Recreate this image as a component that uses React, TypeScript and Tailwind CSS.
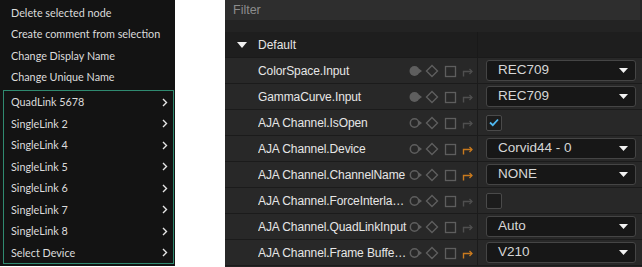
import React from 'react';

type Row = {
  label: string;
  keyed: boolean;
  linked: boolean;
  kind: 'select' | 'check' | 'uncheck';
  value?: string;
};

const rows: Row[] = [
  { label: 'ColorSpace.Input', keyed: true, linked: false, kind: 'select', value: 'REC709' },
  { label: 'GammaCurve.Input', keyed: true, linked: false, kind: 'select', value: 'REC709' },
  { label: 'AJA Channel.IsOpen', keyed: false, linked: false, kind: 'check' },
  { label: 'AJA Channel.Device', keyed: false, linked: true, kind: 'select', value: 'Corvid44 - 0' },
  { label: 'AJA Channel.ChannelName', keyed: false, linked: true, kind: 'select', value: 'NONE' },
  { label: 'AJA Channel.ForceInterlaced', keyed: false, linked: false, kind: 'uncheck' },
  { label: 'AJA Channel.QuadLinkInput', keyed: false, linked: false, kind: 'select', value: 'Auto' },
  { label: 'AJA Channel.Frame Buffer Format', keyed: false, linked: true, kind: 'select', value: 'V210' },
];

const menuTop = ['Delete selected node', 'Create comment from selection', 'Change Display Name', 'Change Unique Name'];
const menuSub = ['QuadLink 5678', 'SingleLink 2', 'SingleLink 4', 'SingleLink 5', 'SingleLink 6', 'SingleLink 7', 'SingleLink 8', 'Select Device'];

function Chevron() {
  return (
    <svg width="6" height="9" viewBox="0 0 6 9" className="shrink-0">
      <polyline points="1,1 4.5,4.5 1,8" fill="none" stroke="#e6e6e6" strokeWidth="1.4" />
    </svg>
  );
}

function RowIcons({ keyed, linked }: { keyed: boolean; linked: boolean }) {
  const g = '#5e5e5e';
  const a = linked ? '#c97a1e' : '#4f4f4f';
  return (
    <svg width="66" height="14" viewBox="0 0 66 14" className="shrink-0">
      {keyed ? (
        <circle cx="5.5" cy="7" r="5" fill={g} />
      ) : (
        <circle cx="5.5" cy="7" r="4.2" fill="none" stroke={g} strokeWidth="1.5" />
      )}
      <polygon points="10,4.8 13,7 10,9.2" fill={g} />
      <polygon points="23,1.5 28.5,7 23,12.5 17.5,7" fill="none" stroke={g} strokeWidth="1.4" />
      <rect x="36.5" y="2.5" width="10" height="10" fill="none" stroke={g} strokeWidth="1.3" />
      <path d="M54.5 12.5 V7.5 H63" fill="none" stroke={a} strokeWidth="1.4" />
      <polyline points="60.5,5 63,7.5 60.5,10" fill="none" stroke={a} strokeWidth="1.3" />
    </svg>
  );
}

function Value({ row }: { row: Row }) {
  if (row.kind === 'select') {
    return (
      <div className="flex h-[21px] w-[150px] items-center justify-between rounded-[3px] border border-[#454545] bg-[#171717] pl-[11px] pr-[7px]">
        <span className="text-[13.5px] text-[#d6d6d6]">{row.value}</span>
        <svg width="9" height="6" viewBox="0 0 9 6">
          <polygon points="0,0 9,0 4.5,5" fill="#f2f2f2" />
        </svg>
      </div>
    );
  }
  return (
    <div className="flex h-[16px] w-[16px] items-center justify-center rounded-[2px] border border-[#4a4a4a] bg-[#1c1c1c]">
      {row.kind === 'check' && (
        <svg width="10" height="9" viewBox="0 0 10 9">
          <polyline points="1,4.5 3.8,7.2 9,1.5" fill="none" stroke="#4fb8f0" strokeWidth="1.8" />
        </svg>
      )}
    </div>
  );
}

export default function App() {
  return (
    <div className="flex h-[267px] w-[642px] overflow-hidden bg-white">
      <div
        className="flex h-[266px] w-[175px] shrink-0 flex-col bg-[#131313] pt-[2px] text-[10.8px] text-[#dcdcdc]"
        style={{ fontFamily: 'Lato, "Open Sans", sans-serif' }}
      >
        {menuTop.map((t) => (
          <div key={t} className="flex h-[21.6px] items-center pl-[11px]">
            {t}
          </div>
        ))}
        <div className="ml-[3px] mr-[1px] mt-[2px] border border-[#2f8a70]">
          {menuSub.map((t) => (
            <div key={t} className="flex h-[21.5px] items-center justify-between pl-[7px] pr-[5px]">
              <span>{t}</span>
              <Chevron />
            </div>
          ))}
        </div>
      </div>

      <div className="w-[50px] shrink-0" />

      <div
        className="flex h-full w-[417px] flex-col bg-[#232323] text-[12px] text-[#e6e6e6]"
        style={{ fontFamily: '"Segoe UI", "Liberation Sans", Arial, sans-serif' }}
      >
        <div className="flex h-[20px] items-center border-r-2 border-[#262626] bg-[#2e2e2e] pl-[8px] text-[12.5px] text-[#8c8c8c]">
          Filter
        </div>
        <div className="h-[12px]" />
        <div className="flex h-[26px] border-b border-[#1a1a1a] bg-[#1e1e1e]">
          <div className="flex w-[253px] items-center border-r border-[#191919] pl-[12px]">
            <svg width="10" height="6" viewBox="0 0 10 6" className="mr-[11px]">
              <polygon points="0,0 10,0 5,6" fill="#f0f0f0" />
            </svg>
            <span>Default</span>
          </div>
          <div className="flex-1" />
        </div>
        {rows.map((r) => (
          <div key={r.label} className="flex h-[26px] border-b border-[#1b1b1b] bg-[#282828]">
            <div className="flex w-[253px] shrink-0 items-center border-r border-[#1b1b1b] pl-[33px] pr-[2px]">
              <span className="min-w-0 flex-1 truncate pr-[1px] tracking-[-0.1px]">{r.label}</span>
              <RowIcons keyed={r.keyed} linked={r.linked} />
            </div>
            <div className="flex flex-1 items-center pl-[8px]">
              <Value row={r} />
            </div>
          </div>
        ))}
      </div>
    </div>
  );
}
